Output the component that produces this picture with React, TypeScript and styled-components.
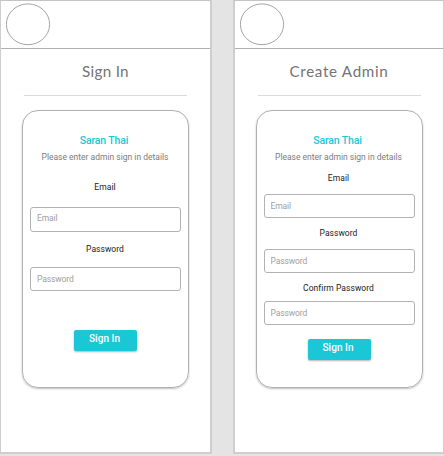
import React from 'react';
import styled, { createGlobalStyle } from 'styled-components';

const GlobalStyle = createGlobalStyle`
  * { box-sizing: border-box; }
  body {
    margin: 0;
    background: #e4e4e4;
    font-family: Roboto, "Liberation Sans", sans-serif;
    overflow: hidden;
  }
`;

const Board = styled.div`
  display: flex;
  gap: 21px;
  width: 446px;
  height: 456px;
`;

const Screen = styled.main<{ $second?: boolean }>`
  flex: none;
  display: flex;
  flex-direction: column;
  align-items: center;
  width: 212px;
  height: 454px;
  background: #fff;
  border-style: solid;
  border-color: #c4c4c4 #cecece #cecece;
  border-width: ${(p) => (p.$second ? '1px 2px 2px 2px' : '1px 2px 2px 1px')};
`;

const Header = styled.header`
  align-self: stretch;
  height: 48px;
  padding: 2px 0 0 5px;
  border-bottom: 1px solid #b0b0b0;
`;

const Logo = styled.svg`
  display: block;
  width: 45px;
  height: 43px;
`;

const Title = styled.h1<{ $spacing: number }>`
  margin: 12px 0 0;
  height: 20px;
  font: 400 15.2px/20px Lato, sans-serif;
  letter-spacing: ${(p) => p.$spacing}px;
  color: #747474;
  white-space: nowrap;
`;

const Divider = styled.hr`
  width: 163px;
  height: 1px;
  margin: 14px 0;
  border: 0;
  flex: none;
  background: #d3dedb;
`;

const Card = styled.form`
  flex: none;
  display: flex;
  flex-direction: column;
  align-items: center;
  width: 167px;
  height: 278px;
  padding-top: 23px;
  border: 1px solid #b0b0b0;
  border-radius: 16px;
  box-shadow: 0 1px 2px rgba(0, 0, 0, 0.25);
`;

const Brand = styled.h2`
  margin: 0 3px 0 0;
  font-size: 10.5px;
  font-weight: 500;
  line-height: 14px;
  letter-spacing: -0.15px;
  color: #1bc6d6;
`;

const Hint = styled.p`
  margin: 3px 1px 0 0;
  font-size: 8.5px;
  line-height: 12px;
  letter-spacing: 0;
  color: #7c7c7c;
  white-space: nowrap;
`;

const Label = styled.label<{ $top: number }>`
  margin: ${(p) => p.$top}px 1px 0 0;
  font-size: 8.5px;
  line-height: 12px;
  letter-spacing: 0.05px;
  color: #222;
  white-space: nowrap;
`;

const Input = styled.input<{ $top: number; $height?: number; $lift?: number }>`
  flex: none;
  width: 151px;
  height: ${(p) => p.$height ?? 24}px;
  margin-top: ${(p) => p.$top}px;
  padding: 0 6px ${(p) => p.$lift ?? 0}px;
  border: 1px solid #b2b2b2;
  border-radius: 3px;
  background: #fff;
  outline: 0;
  font: 400 8.5px Roboto, sans-serif;
  letter-spacing: -0.1px;
  &::placeholder { color: #a0a0a0; opacity: 1; }
`;

const Button = styled.button<{ $top: number }>`
  flex: none;
  width: 63px;
  height: 21px;
  margin-top: ${(p) => p.$top}px;
  padding: 0 2px 3px 0;
  border: 0;
  border-radius: 2px;
  background: #1bc6d6;
  box-shadow: 0 1px 2px rgba(0, 0, 0, 0.3);
  color: #fff;
  font: 500 10px/18px Roboto, sans-serif;
  letter-spacing: 0.05px;
`;

interface Field {
  name: string;
  labelGap: number;
  inputGap: number;
  height?: number;
  lift?: number;
}

interface FormScreenProps {
  title: string;
  spacing: number;
  fields: Field[];
  buttonGap: number;
  second?: boolean;
}

function FormScreen({ title, spacing, fields, buttonGap, second }: FormScreenProps) {
  return (
    <Screen $second={second}>
      <Header>
        <Logo viewBox="0 0 45 43">
          <ellipse cx="22" cy="21.3" rx="21.6" ry="20.4" fill="none" stroke="#8e8e8e" strokeWidth="0.8" />
        </Logo>
      </Header>
      <Title $spacing={spacing}>{title}</Title>
      <Divider />
      <Card>
        <Brand>Saran Thai</Brand>
        <Hint>Please enter admin sign in details</Hint>
        {fields.map((f) => (
          <React.Fragment key={f.name}>
            <Label $top={f.labelGap}>{f.name}</Label>
            <Input
              $top={f.inputGap}
              $height={f.height}
              $lift={f.lift}
              placeholder={f.name === 'Email' ? 'Email' : 'Password'}
            />
          </React.Fragment>
        ))}
        <Button type="button" $top={buttonGap}>Sign In</Button>
      </Card>
    </Screen>
  );
}

const signInFields: Field[] = [
  { name: 'Email', labelGap: 18, inputGap: 14, height: 25, lift: 3 },
  { name: 'Password', labelGap: 11, inputGap: 12 },
];

const createFields: Field[] = [
  { name: 'Email', labelGap: 9, inputGap: 10 },
  { name: 'Password', labelGap: 9, inputGap: 10 },
  { name: 'Confirm Password', labelGap: 9, inputGap: 7 },
];

export default function App() {
  return (
    <>
      <GlobalStyle />
      <Board>
        <FormScreen title="Sign In" spacing={0.3} fields={signInFields} buttonGap={39} />
        <FormScreen title="Create Admin" spacing={0.68} fields={createFields} buttonGap={14} second />
      </Board>
    </>
  );
}
